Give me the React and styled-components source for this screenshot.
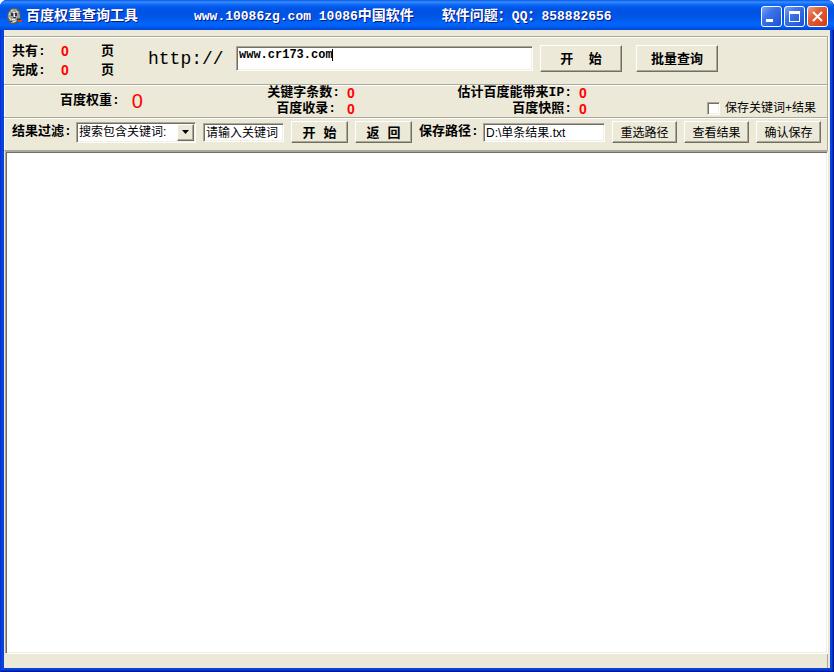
import React from 'react';
import styled, { createGlobalStyle } from 'styled-components';

const App = () => {
  return (
    <>
      <GlobalStyle />
      <Window>
        <TitleBar>
          <AppIcon />
          <Title>
            <span>百度权重查询工具</span>
            <span><Latin>www.10086zg.com 10086</Latin>中国软件</span>
            <span>软件问题：<Latin>QQ</Latin>：<Latin>858882656</Latin></span>
          </Title>
          <Controls>
            <Control aria-label="最小化">
              <svg width="19" height="19"><path d="M4 12h7v3H4z" fill="#fff" /></svg>
            </Control>
            <Control aria-label="最大化">
              <svg width="19" height="19">
                <path d="M4 4h11v11H4zM5 7v7h9V7z" fill="#fff" fillRule="evenodd" />
              </svg>
            </Control>
            <Control aria-label="关闭" $close>
              <svg width="19" height="19"><path d="M5 5l9 9M14 5l-9 9" stroke="#fff" strokeWidth="2" /></svg>
            </Control>
          </Controls>
        </TitleBar>
        <Client>
          <QueryGroup>
            <Pages>
              <span>共有:</span><Count>0</Count><span>页</span>
              <span>完成:</span><Count>0</Count><span>页</span>
            </Pages>
            <Protocol htmlFor="url">http://</Protocol>
            <UrlInput id="url" defaultValue="www.cr173.com" />
            <Button $bold $large>开{'  '}始</Button>
            <Button $bold $large>批量查询</Button>
          </QueryGroup>
          <StatsGroup>
            <Weight>
              <span>百度权重:</span><Value $large>0</Value>
            </Weight>
            <Stats>
              <span>关键字条数:</span><Value>0</Value>
              <Inset>百度收录:</Inset><Value>0</Value>
            </Stats>
            <Stats>
              <span>估计百度能带来IP:</span><Value>0</Value>
              <span>百度快照:</span><Value>0</Value>
            </Stats>
            <Option>
              <Checkbox type="checkbox" />
              保存关键词+结果
            </Option>
          </StatsGroup>
          <FilterGroup>
            <Label htmlFor="filter">结果过滤:</Label>
            <SelectBox>
              <Select id="filter">
                <option>搜索包含关键词:</option>
              </Select>
              <Arrow>
                <svg width="7" height="4"><path d="M0 0h7L3.5 4z" /></svg>
              </Arrow>
            </SelectBox>
            <TextInput aria-label="关键词" defaultValue="请输入关键词" />
            <Button $bold $width={57}>开 始</Button>
            <Button $bold $width={57}>返 回</Button>
            <Label htmlFor="path">保存路径:</Label>
            <TextInput id="path" defaultValue="D:\单条结果.txt" $grow />
            <Button $width={65}>重选路径</Button>
            <Button $width={65}>查看结果</Button>
            <Button $width={65}>确认保存</Button>
          </FilterGroup>
          <Results aria-label="结果" />
          <StatusBar />
        </Client>
      </Window>
    </>
  );
};

const AppIcon = () => (
  <svg width="17" height="17" viewBox="0 0 17 17">
    <path d="M5 0h6l3 3 1 6-2 4-4 3H4l-1-2-2-4 1-6z" fill="#555b60" />
    <path d="M6 1h4l3 3 1 5-2 3-4 3H5l-2-4-1-3 1-4z" fill="#9c9f9c" />
    <path d="M5 3l2-1M10 3l2 2M3 9l2 3M3 7l1-2M7 14l3-1" stroke="#e6e7e2" />
    <path d="M5 5h2v3H5zM9 5h2v3H9zM7 9h3v1H7zM4 13h2v1H4z" fill="#30363c" />
    <path d="M7 4h2v1H7zM8 6h1v3H8zM6 11h3v1H6z" fill="#eee" />
    <path d="M11 11l4 2" stroke="#333" strokeWidth="2" />
    <path d="M12 12h4v2h-4z" fill="#e33d20" />
  </svg>
);

const GlobalStyle = createGlobalStyle`
  * {
    box-sizing: border-box;
  }
  body {
    margin: 0;
    background: #fff;
  }
  body, button, input, select, textarea {
    font-family: "Liberation Sans", "Noto Sans CJK SC", sans-serif;
    font-size: 12px;
    color: #000;
  }
`

const mono = '"Liberation Mono", "Noto Sans CJK SC", monospace';
const sunken = `
  border: 1px solid;
  border-color: #aca899 #fff #fff #aca899;
  box-shadow: inset 1px 1px #716f64, inset -1px -1px #f1efe2;
  border-radius: 0;
  outline: none;
  background-color: #fff;
`;

const Window = styled.div`
  display: flex;
  flex-direction: column;
  min-height: 100vh;
  padding: 0 4px 4px;
  border-radius: 7px 7px 0 0;
  background: #0842dc;
  box-shadow: inset 1px 0 #0831d9, inset -1px -1px #001590, inset -2px -2px #0030c8;
  overflow: hidden;
`

const TitleBar = styled.header`
  display: flex;
  align-items: center;
  height: 30px;
  margin: 0 -4px;
  padding: 3px 6px 0;
  background: linear-gradient(#0058ee 0, #3f8cf8 2px, #1270fa 4px, #0259ed 7px, #0053e3 10px, #0055e6 17px, #0066fd 24px, #0061f5 26px, #0045d4 30px);
`

const Title = styled.h1`
  flex: 1;
  display: flex;
  gap: 28px;
  margin: 0 0 0 3px;
  font: bold 14px/20px ${mono};
  white-space: nowrap;
  color: #fff;
  text-shadow: 1px 1px #0a1883;

  span:first-child {
    margin-right: 28px;
  }
`

const Latin = styled.b`
  font-size: 13px;
`

const Controls = styled.div`
  display: flex;
  gap: 2px;
`

const Control = styled.button`
  display: grid;
  place-items: center;
  width: 21px;
  height: 21px;
  padding: 0;
  border: 1px solid #fff;
  border-radius: 3px;
  background: ${({ $close }) => $close
    ? 'linear-gradient(135deg, #f0a088 0, #e2603b 35%, #d33c10 100%)'
    : 'linear-gradient(135deg, #7ba5f5 0, #3c74ec 35%, #1b51cf 100%)'};
`

const Client = styled.main`
  flex: 1;
  display: flex;
  flex-direction: column;
  padding: 6px 2px 0 0;
  background: #ece9d8;
`

const Group = styled.section`
  display: flex;
  align-items: center;
  border-top: 1px solid #aca899;
  border-right: 1px solid #aca899;
  box-shadow: inset 1px 1px #fff, 1px 0 #fff;
  padding: 0 6px 0 8px;
`

const QueryGroup = styled(Group)`
  height: 48px;
  padding-bottom: 4px;
`

const Pages = styled.div`
  display: grid;
  grid-template-columns: 49px 40px 47px;
  font: bold 13px/19px ${mono};
  padding-top: 4px;
`

const Count = styled.output`
  color: #f00;
  font-family: "Liberation Sans", sans-serif;
  font-size: 14px;
`

const Protocol = styled.label`
  width: 88px;
  font: 18px/24px ${mono};
`

const UrlInput = styled.input`
  ${sunken}
  flex: 1;
  max-width: 297px;
  height: 25px;
  margin-right: 7px;
  padding: 0 2px 8px;
  font: bold 12px/14px ${mono};
  /* text cursor */
  background: linear-gradient(#000, #000) 95px 2px / 1px 12px no-repeat #fff;
`

const Button = styled.button`
  flex: none;
  width: ${({ $large, $width }) => ($large ? 82 : $width)}px;
  height: ${({ $large }) => ($large ? 27 : 22)}px;
  margin-right: ${({ $large }) => ($large ? 14 : 0)}px;
  padding: 0 0 2px;
  border: 1px solid;
  border-color: #fff #716f64 #716f64 #fff;
  box-shadow: inset -1px -1px #aca899;
  background: #ece9d8;
  font-weight: ${({ $bold }) => ($bold ? 'bold' : 'normal')};
  font-size: ${({ $bold }) => ($bold ? 13 : 12)}px;
  font-family: ${({ $bold }) => ($bold ? mono : 'inherit')};
  white-space: pre;
`

const StatsGroup = styled(Group)`
  height: 33px;
  font: bold 13px/16px ${mono};
`

const Weight = styled.div`
  display: flex;
  align-items: center;
  gap: 12px;
  width: 192px;
  padding-left: 48px;
`

const Value = styled.output`
  color: #f00;
  font-family: "Liberation Sans", sans-serif;
  font-weight: ${({ $large }) => ($large ? 'normal' : 'bold')};
  font-size: ${({ $large }) => ($large ? 20 : 14)}px;
`

const Stats = styled.div`
  display: grid;
  grid-template-columns: 136px 20px;
  column-gap: 7px;
  margin-right: 69px;
  text-align: right;
  white-space: nowrap;

  output {
    text-align: left;
  }
`

const Inset = styled.span`
  padding-right: 4px;
`

const Option = styled.label`
  display: flex;
  align-items: center;
  align-self: flex-end;
  gap: 5px;
  margin-left: auto;
  padding-right: 5px;
  font: 12px/18px "Liberation Sans", "Noto Sans CJK SC", sans-serif;
  white-space: nowrap;
`

const Checkbox = styled.input`
  ${sunken}
  appearance: none;
  width: 13px;
  height: 13px;
  margin: 0;
`

const FilterGroup = styled(Group)`
  gap: 7px;
  height: 34px;
  padding-bottom: 4px;
  border-bottom: 1px solid #aca899;
`

const Label = styled.label`
  width: 57px;
  font: bold 13px/16px ${mono};
  white-space: nowrap;
`

const SelectBox = styled.div`
  position: relative;
  width: 120px;
`

const Select = styled.select`
  ${sunken}
  appearance: none;
  display: block;
  width: 100%;
  height: 21px;
  padding: 0 18px 0 2px;
`

const Arrow = styled.span`
  position: absolute;
  top: 2px;
  right: 2px;
  bottom: 2px;
  width: 17px;
  display: grid;
  place-items: center;
  border: 1px solid;
  border-color: #fff #716f64 #716f64 #fff;
  box-shadow: inset -1px -1px #aca899;
  background: #ece9d8;
  pointer-events: none;
`

const TextInput = styled.input`
  ${sunken}
  flex: ${({ $grow }) => ($grow ? 1 : 'none')};
  width: 81px;
  min-width: 0;
  height: 19px;
  padding: 0 2px 2px;
`

const Results = styled.textarea`
  ${sunken}
  flex: 1;
  margin: 0 0 0 1px;
  resize: none;
`

const StatusBar = styled.footer`
  height: 14px;
  border-right: 1px solid #aca899;
`

export default App;
